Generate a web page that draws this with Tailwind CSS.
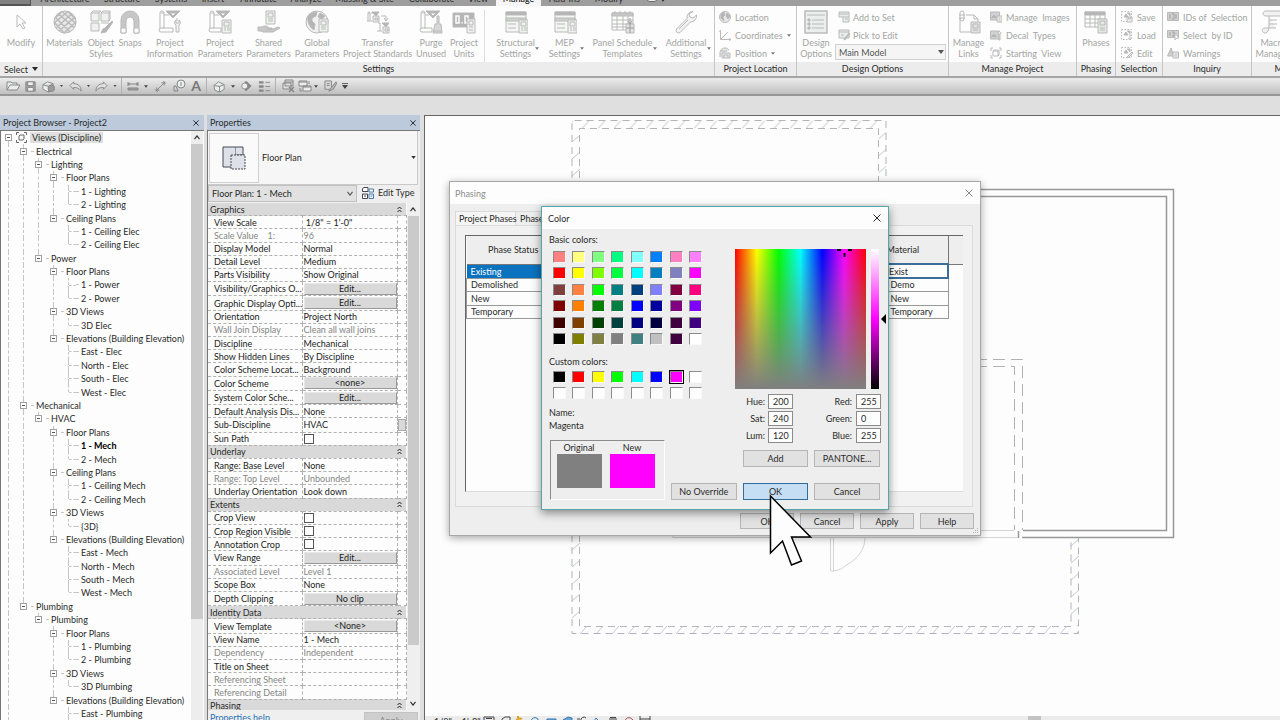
<!DOCTYPE html>
<html lang="en">
<head>
    <meta charset="utf-8">
    <meta name="viewport" content="width=device-width, initial-scale=1">
    <title>Project2 - Floor Plan: 1 - Mech</title>
    <script src="https://cdn.jsdelivr.net/npm/@tailwindcss/browser@4"></script>
</head>
<body class="h-screen overflow-hidden flex flex-col bg-[#dedfde] font-['Lato','Open_Sans',sans-serif] text-[9px] leading-[11px] text-[#2a2a2a]">

    <!-- ICON SPRITE (stroke comes from the toolbar that uses the icon) -->
    <svg class="hidden">
        <symbol id="i-modify" viewBox="0 0 24 24"><path d="M8 5v12l3-3 3 5 2-1-3-5h4z" fill="#fcfdfc"/></symbol>
        <symbol id="i-materials" viewBox="0 0 24 24"><circle cx="12" cy="12" r="11" fill="#e6e7e6"/><path d="M5 3.500l16 14M2 7l15 15M1 12l10 11M9 1.500l14 12M15 1.500l8 8M19 3.500L3 18M22 7L6 21M23 12L11 23M15 1.500L1 13M9 1.500L2 8" stroke-width="1.400"/></symbol>
        <symbol id="i-styles" viewBox="0 0 24 24"><path d="M2 3h8v8H2zM12 3h8v8h-8zM2 13h8v8H2zM2 3l2-2h8l-2 2M12 3l2-2h7l-1 2M21 1v8l-1 2M12 13h8" fill="#f0f1f0"/><path d="M23 11l-7 7-2 1-2 4 5-1 2-3 5-7z" fill="#b4b5b4"/></symbol>
        <symbol id="i-snaps" viewBox="0 0 24 24"><path d="M3 23V10a9 9 0 0 1 18 0v13h-5V11a4 4 0 0 0-8 0v12z" fill="#c6c7c6"/><path d="M3 18h5v5H3zM16 18h5v5h-5z" fill="#fcfdfc"/></symbol>
        <symbol id="i-info" viewBox="0 0 24 24"><path d="M3 3h3v15H3a2 2 0 1 0 0 4h12v-4H5M6 3a2 2 0 0 0-4 0v16M6 5h5M19 8v3" fill="none"/><path d="M8 1h14l-7 7z" fill="#b4b5b4"/><path d="M12 3h6l-3 3z" fill="#fcfdfc"/><path d="M18 10a3 3 0 0 0 0 5v7h3v-7a3 3 0 0 0 0-5v3h-3z" fill="#f0f1f0"/></symbol>
        <symbol id="i-param" viewBox="0 0 24 24"><path d="M3 3h3v15H3a2 2 0 1 0 0 4h10v-4H5M6 3a2 2 0 0 0-4 0v16M6 5h5"/><path d="M8 1h14l-7 7z" fill="#b4b5b4"/><path d="M12 3h6l-3 3z" fill="#fcfdfc"/><path d="M14 10h9v13h-9z" fill="#f0f1f0"/><path d="M16 12h5v4h-5zM16 18h2M19 18h3M16 20h2M19 20h3"/></symbol>
        <symbol id="i-shared" viewBox="0 0 24 24"><path d="M9 1h9v13H9z" fill="#f0f1f0"/><path d="M11 3h5v4h-5zM11 9h5M11 11h5"/><path d="M1 17h4c3-2 6-1 7 1h3v1h-5 6l5-2 2 1-7 4H6l-2-1H1z" fill="#c6c7c6"/></symbol>
        <symbol id="i-global" viewBox="0 0 24 24"><circle cx="12" cy="12" r="11" fill="#f0f1f0"/><path d="M3 6c3-3 6-4 9-4l-1 4-4 2v3l3 3-1 6c-5-3-7-9-6-14zM15 3l5 3-3 3-4-2z" fill="#b4b5b4"/><path d="M14 9h9v13h-9z" fill="#f0f1f0"/><path d="M16 11h5v4h-5zM16 17h5M16 19h5"/></symbol>
        <symbol id="i-transfer" viewBox="0 0 24 24"><path d="M2 3h2v8M1 11h5M4 3a1 1 0 0 0-2 0v8M12 13h2v8M11 21h5M5 3h2M15 6h5v4M18 8l2 3 2-3"/><path d="M6 2h7l-3 4zM16 13h7l-3 4z" fill="#b4b5b4"/><path d="M7 6h6v6H7zM17 17h6v6h-6z" fill="#f0f1f0"/><path d="M9 8h3v2H9zM19 19h3v2h-3z"/></symbol>
        <symbol id="i-purge" viewBox="0 0 24 24"><path d="M3 3h3v15H3a2 2 0 1 0 0 4h10v-4H5M6 3a2 2 0 0 0-4 0v16M6 5h4"/><path d="M7 1h14l-7 7z" fill="#b4b5b4"/><path d="M11 3h6l-3 3z" fill="#fcfdfc"/><path d="M18 6h2v8h2l1 9h-9l2-9h2z" fill="#d6d7d6"/><path d="M14 21h9"/></symbol>
        <symbol id="i-units" viewBox="0 0 24 24"><path d="M1 3h21v14H1z" fill="#b4b5b4"/><path d="M4 6h3v7H4zM13 6h3v7h-3zM10 12v1.500" stroke="#fcfdfc" stroke-width="1.500"/><path d="M15 9h8v14h-8z" fill="#f0f1f0"/><path d="M17 11h4v4h-4zM17 17h4M17 20h4"/></symbol>
        <symbol id="i-struct" viewBox="0 0 24 24"><path d="M2 2h20v20H2z" fill="#f4f5f4"/><path d="M2 2h20v3H2z" fill="#b4b5b4"/><path d="M2 8h20v3H2z" fill="#d0d1d0"/><path d="M4 14h8M4 18h8"/><path d="M15 10h9v13h-9z" fill="#f0f1f0"/><path d="M17 12h5v4h-5zM17 18h2M20 18h3M17 20h2M20 20h3"/></symbol>
        <symbol id="i-panel" viewBox="0 0 24 24"><path d="M1 3h21v17H1z" fill="#fcfdfc"/><path d="M1 3h21v3H1z" fill="#c6c7c6"/><path d="M4 1v3M9 1v3M14 1v3M19 1v3M1 10h21M1 14h21M1 17h21M6 6v14M12 6v14M17 6v14"/><path d="M15 14h8v9h-8z" fill="#e0e1e0"/><path d="M15 18h8M19 14v9M19 8v6M17 11l2 3 2-3" stroke="#9a9b9a"/></symbol>
        <symbol id="i-wrench" viewBox="0 0 24 24"><path d="M19 1.500a6 6 0 0 0-6 7L2.500 19a2.500 2.500 0 0 0 3.500 3.500L16.500 12a6 6 0 0 0 6-7L19 8l-3-1-1-3z" fill="#f0f1f0"/><path d="M14 10l-9 9"/></symbol>
        <symbol id="i-design" viewBox="0 0 24 24"><path d="M1 1h22v22H1z" fill="#eceded" stroke-width="1.500"/><path d="M3 5h18" /><path d="M4 9h2v2H4zM4 13h2v2H4zM4 17h2v2H4z" fill="#b4b5b4"/><path d="M8 10h12M8 14h12M8 18h12"/></symbol>
        <symbol id="i-links" viewBox="0 0 24 24"><path d="M3 8v14h12M9 5h8l4 4v3M17 5v4h4"/><rect x="3" y="1" width="4" height="10" rx="2"/><path d="M2 5h6M2 8h6"/><path d="M14 12h9v11h-9z" fill="#e0e1e0"/><path d="M16 14h5v4h-5zM16 20h5"/></symbol>
        <symbol id="i-phases" viewBox="0 0 24 24"><path d="M1 2h20v15H1z" fill="#fcfdfc"/><path d="M1 2h20v3H1z" fill="#b4b5b4"/><path d="M1 9h20M1 13h20M6 5v12M11 5v12M16 5v12"/><path d="M14 9h9v14h-9z" fill="#e6e7e6"/><path d="M16 11h5v4h-5zM16 18h5M16 20h5"/></symbol>
        <symbol id="i-macro" viewBox="0 0 24 24"><path d="M5 1h16a3 3 0 0 1 0 5H8v10c0 4-1 7-4 7s-4-5 0-5h11M5 1C1 1 1 6 5 6h3M8 10h8M8 14h8" fill="#f0f1f0"/></symbol>

        <symbol id="s-location" viewBox="0 0 12 12"><circle cx="6" cy="6" r="5.500" fill="#e6e7e6"/><path d="M2 3l3-2 1 3-2 2 1 4-3-3zM8 2l3 3-2 3-2-3z" fill="#b4b5b4"/></symbol>
        <symbol id="s-coord" viewBox="0 0 12 12"><path d="M1.500 1v9.500H11M1.500 10.500L9 3M1.500 1l-1 2M10 9.500l2 1-2 1" /></symbol>
        <symbol id="s-position" viewBox="0 0 12 12"><path d="M1 10V5a5 5 0 0 1 9-2M3 11V6h8v5zM5 11V8h4v3M2 4h6" fill="#e6e7e6"/></symbol>
        <symbol id="s-add" viewBox="0 0 12 12"><path d="M1 1h10v5H1zM1 3h10M5 6v5h6V6M7 8h3" fill="#eceded"/></symbol>
        <symbol id="s-pick" viewBox="0 0 12 12"><path d="M1 1h10v8H1zM1 3h10M3 6h3" fill="#eceded"/><path d="M11 4l-4 5-1 2 2-1 4-5z" fill="#c6c7c6"/></symbol>
        <symbol id="s-image" viewBox="0 0 12 12"><path d="M.5 1h9v8h-9z" fill="#d0d1d0"/><path d="M1 7l3-3 3 3" fill="#b4b5b4"/><path d="M7 5h5v6H7z" fill="#f0f1f0"/><path d="M8.500 7h2M8.500 9h2"/></symbol>
        <symbol id="s-decal" viewBox="0 0 12 12"><path d="M.5 2h9v8h-9z" fill="#d0d1d0"/><path d="M1 8l3-3 3 3" fill="#b4b5b4"/><path d="M8 3c0 3 3 3 3 0M9 5v6h1V5" fill="#f0f1f0"/></symbol>
        <symbol id="s-start" viewBox="0 0 12 12"><path d="M3 1H1v3M9 1h2v3M1 8v3h2M11 8v3H9M3 4l1-1h5v5l-1 1H3zM3 4h5v5"/></symbol>
        <symbol id="s-sel" viewBox="0 0 12 12"><path d="M.5.5h10v10H.5z" stroke-dasharray="1.500 1.500"/><path d="M3 6l2-3 2 3zM6 2h3v3" fill="#b4b5b4"/><path d="M6 6h5v5H6z" fill="#f0f1f0"/><path d="M7.500 6v2h2V6"/></symbol>
        <symbol id="s-load" viewBox="0 0 12 12"><path d="M.5.5h10v10H.5z" stroke-dasharray="1.500 1.500"/><path d="M3 6l2-3 2 3zM6 2h3v3" fill="#b4b5b4"/><path d="M9 5v6M7 9l2 2 2-2" /></symbol>
        <symbol id="s-edit" viewBox="0 0 12 12"><path d="M.5.5h10v10H.5z" stroke-dasharray="1.500 1.500"/><path d="M3 6l2-3 2 3zM6 2h3v3" fill="#b4b5b4"/><path d="M11 5l-4 4-1 2 2-1 4-4z" fill="#f0f1f0"/></symbol>
        <symbol id="s-ids" viewBox="0 0 12 12"><path d="M.5 1.500h11v8H.5z" fill="#d0d1d0"/><path d="M3 3v5M5 3h2v5H5M9 3v5" stroke="#a0a1a0"/></symbol>
        <symbol id="s-byid" viewBox="0 0 12 12"><path d="M.5 1.500h11v7H.5z" fill="#d0d1d0"/><path d="M3 3v4M5 3h2v4H5" stroke="#a0a1a0"/><path d="M8 4v7l2-2h2z" fill="#fcfdfc"/></symbol>
        <symbol id="s-warn" viewBox="0 0 12 12"><path d="M4 1L.5 9H7z" fill="#d0d1d0"/><path d="M6 5h5.500v6H6z" fill="#f0f1f0"/><path d="M7.500 7h3M7.500 9h3M4 4v2"/></symbol>

        <symbol id="q-open" viewBox="0 0 14 14"><path d="M1 11V3h4l1 1h5v2M1 11l3-5h10l-3 5z" fill="#eceded"/></symbol>
        <symbol id="q-save" viewBox="0 0 14 14"><path d="M2 2h10v10H2z" fill="#a0a1a0"/><path d="M4 2h6v4H4zM4 8h6v4H4z" fill="#f0f1f0"/></symbol>
        <symbol id="q-sync" viewBox="0 0 14 14"><path d="M1 5l5-3 6 2v6l-5 3-6-3zM1 5l6 2 5-3M7 7v6" fill="#eceded"/><circle cx="10" cy="9" r="3.500" fill="#9a9b9a"/></symbol>
        <symbol id="q-undo" viewBox="0 0 14 14"><path d="M1 6l4-4v2c5 0 8 3 8 8-2-3-4-4-8-4v2z" fill="#e0e1e0"/></symbol>
        <symbol id="q-redo" viewBox="0 0 14 14"><path d="M13 6L9 2v2c-5 0-8 3-8 8 2-3 4-4 8-4v2z" fill="#e0e1e0"/></symbol>
        <symbol id="q-dim" viewBox="0 0 14 14"><path d="M2 3v4M12 3v4M2 5h10M4 4L2 5l2 1M10 4l2 1-2 1"/><path d="M2 9h10v2H2z" fill="#a0a1a0"/></symbol>
        <symbol id="q-align" viewBox="0 0 14 14"><path d="M2 12L12 2M1 10l3 3M10 1l3 3M3 8v3h3M8 3h3v3"/></symbol>
        <symbol id="q-tag" viewBox="0 0 14 14"><circle cx="9" cy="5" r="4" fill="#eceded"/><path d="M9 3v4M2 7v5h4L4 7z"/></symbol>
        <symbol id="q-3d" viewBox="0 0 14 14"><path d="M1 6l5-4 6 3v5l-5 3-5-2zM1 6l6 1 5-2M7 7v6" fill="#eceded"/></symbol>
        <symbol id="q-section" viewBox="0 0 14 14"><path d="M6 2h2l5 5-5 5H6z" fill="#868786"/><circle cx="5.500" cy="7" r="3.500" fill="#eceded"/></symbol>
        <symbol id="q-thin" viewBox="0 0 14 14"><path d="M1 2.500h5M1 7h5M1 11.500h5" stroke-width="2.500"/><path d="M8 2.500h5M8 7h5M8 11.500h5"/></symbol>
        <symbol id="q-close" viewBox="0 0 14 14"><path d="M4 1h8v6H4zM2 4h8v6H2zM4 3h8" fill="#e0e1e0"/><path d="M8 8l5 5M13 8l-5 5" stroke-width="1.500"/></symbol>
        <symbol id="q-switch" viewBox="0 0 14 14"><path d="M1 2h8v5H1zM5 7h8v5H5z" fill="#eceded"/><path d="M1 3h8M5 8h8M11 2v3M2 9v3h2"/></symbol>
        <symbol id="q-paste" viewBox="0 0 14 14"><path d="M1 1h7v9H1zM3 4h3M3 6h3" fill="#d6d7d6"/><path d="M13 2L8 8l-3 4 5-2 4-7z" fill="#b4b5b4"/></symbol>

        <symbol id="caret" viewBox="0 0 6 4"><path d="M0 0h6L3 4z" fill="currentColor" stroke="none"/></symbol>
        <symbol id="x" viewBox="0 0 8 8"><path d="M.5.5l7 7M7.500.5l-7 7" stroke="currentColor" fill="none"/></symbol>
        <symbol id="up" viewBox="0 0 8 6"><path d="M1 5l3-4 3 4" stroke="currentColor" stroke-width="1.300" fill="none"/></symbol>
    </svg>

    <!-- RIBBON TABS -->
    <nav class="h-[6px] shrink-0 bg-[#9d9e9d] overflow-hidden flex items-end">
        <button class="w-[31px] mr-[2px] h-[6px] border-b-2 border-r border-[#555] bg-[#808180]" aria-label="Application menu"></button>
        <button class="w-[64px] pb-[2px]">Architecture</button>
        <button class="w-[50px] pb-[2px]">Structure</button>
        <button class="w-[48px] pb-[2px]">Systems</button>
        <button class="w-[36px] pb-[2px]">Insert</button>
        <button class="w-[55px] pb-[2px]">Annotate</button>
        <button class="w-[40px] pb-[2px]">Analyze</button>
        <button class="w-[77px] pb-[2px]">Massing &amp; Site</button>
        <button class="w-[57px] pb-[2px]">Collaborate</button>
        <button class="w-[36px] pb-[2px]">View</button>
        <button class="w-[45px] pb-[2px] bg-[#f4f5f4] text-black">Manage</button>
        <button class="w-[47px] pb-[2px]">Add-Ins</button>
        <button class="w-[42px] pb-[2px]">Modify</button>
        <button class="ml-[16px] mb-[4px] w-[12px] h-[8px] rounded-sm border border-[#666] bg-[#f0f1f0]" aria-label="Minimize ribbon"></button>
        <svg class="ml-[3px] mb-[4px] w-[4px] h-[3px]"><use href="#caret"/></svg>
    </nav>

    <!-- RIBBON -->
    <div class="h-[72px] shrink-0 flex overflow-hidden bg-[#fcfdfc] border-b-2 border-[#a4a5a4] fill-none stroke-[#b9bab9] text-[#a4a5a4] whitespace-nowrap">
        <section class="w-[43px] shrink-0 flex flex-col border-r border-[#c4c5c4]">
            <div class="h-[56px] pt-[4px] flex">
                <button class="flex-1 flex flex-col items-center"><svg class="size-6 mb-[3px]"><use href="#i-modify"/></svg>Modify</button>
            </div>
            <button class="h-[14px] flex items-center justify-center gap-[4px] bg-[#ebeceb] text-[#2a2a2a]">Select <svg class="w-[6px] h-[4px]"><use href="#caret"/></svg></button>
        </section>

        <section class="w-[672px] shrink-0 flex flex-col border-r border-[#c4c5c4]">
            <div class="h-[56px] pt-[4px] flex items-start">
                <button class="w-[43px] flex flex-col items-center"><svg class="size-6 mb-[3px]"><use href="#i-materials"/></svg>Materials</button>
                <button class="w-[30px] flex flex-col items-center"><svg class="size-6 mb-[3px]"><use href="#i-styles"/></svg><span>Object<br>Styles</span></button>
                <button class="w-[28px] flex flex-col items-center"><svg class="size-6 mb-[3px]"><use href="#i-snaps"/></svg>Snaps</button>
                <button class="w-[52px] flex flex-col items-center"><svg class="size-6 mb-[3px]"><use href="#i-info"/></svg><span>Project<br>Information</span></button>
                <button class="w-[48px] flex flex-col items-center"><svg class="size-6 mb-[3px]"><use href="#i-param"/></svg><span>Project<br>Parameters</span></button>
                <button class="w-[49px] flex flex-col items-center"><svg class="size-6 mb-[3px]"><use href="#i-shared"/></svg><span>Shared<br>Parameters</span></button>
                <button class="w-[48px] flex flex-col items-center"><svg class="size-6 mb-[3px]"><use href="#i-global"/></svg><span>Global<br>Parameters</span></button>
                <button class="w-[73px] flex flex-col items-center"><svg class="size-6 mb-[3px]"><use href="#i-transfer"/></svg><span>Transfer<br>Project Standards</span></button>
                <button class="w-[34px] flex flex-col items-center"><svg class="size-6 mb-[3px]"><use href="#i-purge"/></svg><span>Purge<br>Unused</span></button>
                <button class="w-[32px] flex flex-col items-center"><svg class="size-6 mb-[3px]"><use href="#i-units"/></svg><span>Project<br>Units</span></button>
                <div class="w-[5px] mr-[3px] h-[52px] border-r border-[#dcdddc]"></div>
                <button class="relative w-[55px] flex flex-col items-center"><svg class="size-6 mb-[3px]"><use href="#i-struct"/></svg><span>Structural<br>Settings</span><svg class="absolute right-[4px] bottom-[9px] w-[4px] h-[3px] text-[#777]"><use href="#caret"/></svg></button>
                <button class="relative w-[43px] flex flex-col items-center"><svg class="size-6 mb-[3px]"><use href="#i-struct"/></svg><span>MEP<br>Settings</span><svg class="absolute right-[2px] bottom-[9px] w-[4px] h-[3px] text-[#777]"><use href="#caret"/></svg></button>
                <button class="relative w-[73px] flex flex-col items-center"><svg class="size-6 mb-[3px]"><use href="#i-panel"/></svg><span>Panel Schedule<br>Templates</span><svg class="absolute right-[2px] bottom-[9px] w-[4px] h-[3px] text-[#777]"><use href="#caret"/></svg></button>
                <button class="relative w-[54px] flex flex-col items-center"><svg class="size-6 mb-[3px]"><use href="#i-wrench"/></svg><span>Additional<br>Settings</span><svg class="absolute right-[2px] bottom-[9px] w-[4px] h-[3px] text-[#777]"><use href="#caret"/></svg></button>
            </div>
            <h2 class="h-[14px] leading-[14px] text-center bg-[#ebeceb] text-[#2a2a2a]">Settings</h2>
        </section>

        <section class="w-[82px] shrink-0 flex flex-col border-r border-[#c4c5c4]">
            <div class="h-[56px] pt-[2px] pl-[4px] flex flex-col items-start">
                <button class="h-[18px] flex items-center gap-[4px]"><svg class="size-3"><use href="#s-location"/></svg>Location</button>
                <button class="h-[18px] flex items-center gap-[4px]"><svg class="size-3"><use href="#s-coord"/></svg>Coordinates<svg class="w-[4px] h-[3px] text-[#777]"><use href="#caret"/></svg></button>
                <button class="h-[18px] flex items-center gap-[4px]"><svg class="size-3"><use href="#s-position"/></svg>Position<svg class="w-[4px] h-[3px] text-[#777]"><use href="#caret"/></svg></button>
            </div>
            <h2 class="h-[14px] leading-[14px] text-center bg-[#ebeceb] text-[#2a2a2a]">Project Location</h2>
        </section>

        <section class="w-[152px] shrink-0 flex flex-col border-r border-[#c4c5c4]">
            <div class="h-[56px] flex">
                <button class="w-[38px] pt-[4px] flex flex-col items-center"><svg class="size-6 mb-[3px]"><use href="#i-design"/></svg><span>Design<br>Options</span></button>
                <div class="flex-1 pt-[2px] pr-[2px] flex flex-col items-start">
                    <button class="h-[18px] pl-[3px] flex items-center gap-[3px]"><svg class="size-3"><use href="#s-add"/></svg>Add to Set</button>
                    <button class="h-[18px] pl-[3px] flex items-center gap-[3px]"><svg class="size-3"><use href="#s-pick"/></svg>Pick to Edit</button>
                    <div class="relative w-full">
                        <select aria-label="Active design option" class="appearance-none w-full h-[16px] pl-[3px] border border-[#cfd0cf] bg-[#f4f5f4] text-[#555]"><option>Main Model</option></select>
                        <svg class="absolute right-[2px] top-[6px] w-[6px] h-[4px] text-[#555]"><use href="#caret"/></svg>
                    </div>
                </div>
            </div>
            <h2 class="h-[14px] leading-[14px] text-center bg-[#ebeceb] text-[#2a2a2a]">Design Options</h2>
        </section>

        <section class="w-[128px] shrink-0 flex flex-col border-r border-[#c4c5c4]">
            <div class="h-[56px] flex">
                <button class="w-[39px] pt-[4px] flex flex-col items-center"><svg class="size-6 mb-[3px]"><use href="#i-links"/></svg><span>Manage<br>Links</span></button>
                <div class="pt-[2px] pl-[2px] flex flex-col items-start">
                    <button class="h-[18px] flex items-center gap-[4px]"><svg class="size-3"><use href="#s-image"/></svg>Manage &nbsp;Images</button>
                    <button class="h-[18px] flex items-center gap-[4px]"><svg class="size-3"><use href="#s-decal"/></svg>Decal &nbsp;Types</button>
                    <button class="h-[18px] flex items-center gap-[4px]"><svg class="size-3"><use href="#s-start"/></svg>Starting &nbsp;View</button>
                </div>
            </div>
            <h2 class="h-[14px] leading-[14px] text-center bg-[#ebeceb] text-[#2a2a2a]">Manage Project</h2>
        </section>

        <section class="w-[39px] shrink-0 flex flex-col border-r border-[#c4c5c4]">
            <div class="h-[56px] pt-[4px] flex">
                <button class="flex-1 flex flex-col items-center"><svg class="size-6 mb-[3px]"><use href="#i-phases"/></svg>Phases</button>
            </div>
            <h2 class="h-[14px] leading-[14px] text-center bg-[#ebeceb] text-[#2a2a2a]">Phasing</h2>
        </section>

        <section class="w-[47px] shrink-0 flex flex-col border-r border-[#c4c5c4]">
            <div class="h-[56px] pt-[2px] pl-[5px] flex flex-col items-start">
                <button class="h-[18px] flex items-center gap-[4px]"><svg class="size-3"><use href="#s-sel"/></svg>Save</button>
                <button class="h-[18px] flex items-center gap-[4px]"><svg class="size-3"><use href="#s-load"/></svg>Load</button>
                <button class="h-[18px] flex items-center gap-[4px]"><svg class="size-3"><use href="#s-edit"/></svg>Edit</button>
            </div>
            <h2 class="h-[14px] leading-[14px] text-center bg-[#ebeceb] text-[#2a2a2a]">Selection</h2>
        </section>

        <section class="w-[89px] shrink-0 flex flex-col border-r border-[#c4c5c4]">
            <div class="h-[56px] pt-[2px] pl-[4px] flex flex-col items-start">
                <button class="h-[18px] flex items-center gap-[4px]"><svg class="size-3"><use href="#s-ids"/></svg>IDs of &nbsp;Selection</button>
                <button class="h-[18px] flex items-center gap-[4px]"><svg class="size-3"><use href="#s-byid"/></svg>Select &nbsp;by ID</button>
                <button class="h-[18px] flex items-center gap-[4px]"><svg class="size-3"><use href="#s-warn"/></svg>Warnings</button>
            </div>
            <h2 class="h-[14px] leading-[14px] text-center bg-[#ebeceb] text-[#2a2a2a]">Inquiry</h2>
        </section>

        <section class="w-[74px] shrink-0 flex flex-col">
            <div class="h-[56px] pt-[4px] pl-[3px] flex">
                <button class="w-[36px] flex flex-col items-center"><svg class="size-6 mb-[3px]"><use href="#i-macro"/></svg><span>Macro<br>Manager</span></button>
            </div>
            <h2 class="h-[14px] leading-[14px] text-center bg-[#ebeceb] text-[#2a2a2a]">Macros</h2>
        </section>
    </div>

    <!-- QUICK ACCESS TOOLBAR -->
    <div class="h-[18px] shrink-0 flex items-center pl-[1px] border-b-2 border-[#969796] bg-gradient-to-b from-[#ebeceb] to-[#bfc0bf] fill-none stroke-[#868786] text-[#444]">
        <button class="w-[23px] flex justify-center" aria-label="Open"><svg class="size-[14px]"><use href="#q-open"/></svg></button>
        <button class="w-[13px] flex justify-center" aria-label="Save"><svg class="size-[13px]"><use href="#q-save"/></svg></button>
        <button class="w-[23px] flex justify-center" aria-label="Synchronize"><svg class="size-[13px]"><use href="#q-sync"/></svg></button>
        <svg class="w-[3px] h-[2px]"><use href="#caret"/></svg>
        <button class="w-[24px] flex justify-center" aria-label="Undo"><svg class="size-[13px]"><use href="#q-undo"/></svg></button>
        <svg class="w-[3px] h-[2px]"><use href="#caret"/></svg>
        <button class="w-[23px] flex justify-center" aria-label="Redo"><svg class="size-[13px]"><use href="#q-redo"/></svg></button>
        <svg class="w-[4px] h-[2px]"><use href="#caret"/></svg>
        <div class="w-[5px] mr-[4px] h-[16px] border-r border-[#b0b1b0]"></div>
        <button class="w-[14px] flex justify-center" aria-label="Measure"><svg class="size-[14px]"><use href="#q-dim"/></svg></button>
        <svg class="w-[4px] h-[3px] mx-[4px]"><use href="#caret"/></svg>
        <button class="w-[17px] flex justify-center" aria-label="Aligned dimension"><svg class="size-[13px]"><use href="#q-align"/></svg></button>
        <button class="w-[19px] flex justify-center" aria-label="Tag by category"><svg class="size-[14px]"><use href="#q-tag"/></svg></button>
        <button class="w-[16px] font-bold text-[14px] leading-[14px] text-[#777]" aria-label="Text">A</button>
        <div class="w-[3px] mr-[3px] h-[16px] border-r border-[#b0b1b0]"></div>
        <button class="w-[19px] flex justify-center" aria-label="Default 3D view"><svg class="size-[13px]"><use href="#q-3d"/></svg></button>
        <svg class="w-[4px] h-[3px] mx-[2px]"><use href="#caret"/></svg>
        <button class="w-[18px] flex justify-center" aria-label="Section"><svg class="size-[12px]"><use href="#q-section"/></svg></button>
        <button class="w-[18px] flex justify-center" aria-label="Thin lines"><svg class="size-[13px]"><use href="#q-thin"/></svg></button>
        <div class="w-[3px] mr-[2px] h-[16px] border-r border-[#b0b1b0]"></div>
        <button class="w-[19px] flex justify-center" aria-label="Close hidden windows"><svg class="size-[14px]"><use href="#q-close"/></svg></button>
        <button class="w-[15px] flex justify-center" aria-label="Switch windows"><svg class="size-[14px]"><use href="#q-switch"/></svg></button>
        <svg class="w-[4px] h-[3px] mx-[2px]"><use href="#caret"/></svg>
        <button class="w-[20px] flex justify-center" aria-label="Match type"><svg class="size-[13px]"><use href="#q-paste"/></svg></button>
        <button class="w-[10px] flex flex-col items-center gap-px" aria-label="Customize toolbar"><span class="w-[6px] h-px bg-[#666]"></span><svg class="w-[6px] h-[4px]"><use href="#caret"/></svg></button>
    </div>

    <main class="flex-1 min-h-0 mt-[19px] flex">
        <!-- PROJECT BROWSER -->
        <aside class="w-[204px] mr-[3px] shrink-0 flex flex-col">
            <header class="h-[15px] pl-[3px] pr-[5px] shrink-0 flex items-center justify-between bg-[#bccadb]">
                <h2>Project Browser - Project2</h2>
                <button aria-label="Close project browser"><svg class="size-[6px] text-black"><use href="#x"/></svg></button>
            </header>
            <div class="flex-1 min-h-0 flex border-t border-l border-[#777] bg-[#fcfdfc]">
                <ul id="tree" class="flex-1 min-w-0 flex flex-col whitespace-nowrap"></ul>
                <div class="w-[12px] mr-[1px] flex flex-col bg-[#ededed]">
                    <button class="h-[13px] flex items-center justify-center" aria-label="Scroll up"><svg class="w-[8px] h-[5px]"><use href="#up"/></svg></button>
                    <div class="h-[475px] bg-[#c9cac9]"></div>
                </div>
            </div>
        </aside>

        <!-- PROPERTIES -->
        <aside class="w-[213px] mr-[4px] shrink-0 flex flex-col bg-[#eeefee]">
            <header class="h-[15px] pl-[3px] pr-[4px] shrink-0 flex items-center justify-between bg-[#bccadb]">
                <h2>Properties</h2>
                <button aria-label="Close properties"><svg class="size-[6px] text-black"><use href="#x"/></svg></button>
            </header>
            <div class="flex-1 min-h-0 flex flex-col border-t border-l border-[#777]">
                <button class="h-[54px] mr-[2px] p-px shrink-0 flex items-center border-b border-r border-[#c8c9c8] bg-[#f5f6f5] text-left">
                    <span class="size-[50px] mr-[3px] flex items-center justify-center border border-[#cfd0cf] bg-[#f9faf9]">
                        <svg viewBox="0 0 24 24" class="size-6" fill="#dfe1e8" stroke="#444a55"><path d="M1 1h13v20H1z"/><path d="M14 1h7v8H14" /><path d="M9 9h14v14H9z" stroke-dasharray="2 1"/></svg>
                    </span>
                    <span class="flex-1">Floor Plan</span>
                    <svg class="w-[5px] h-[3px] text-[#333]"><use href="#caret"/></svg>
                </button>
                <div class="h-[18px] shrink-0 flex">
                    <div class="relative w-[149px]">
                        <select aria-label="View" class="appearance-none w-full h-[17px] pl-[3px] border border-[#c0c1c0] bg-[#e0e1e0]"><option>Floor Plan: 1 - Mech</option></select>
                        <svg class="absolute right-[3px] top-[6px] w-[8px] h-[5px] rotate-180 text-[#555]"><use href="#up"/></svg>
                    </div>
                    <button class="flex-1 pl-[5px] pb-[3px] flex items-center gap-[4px]">
                        <svg viewBox="0 0 12 12" class="size-3" fill="#fff" stroke="#445"><path d="M2 .5h4v4H.5v-3zM.5 7h5v4.500h-5zM2 9h2"/><path d="M7 2h4.500v3H7zM7 7h4.500v4.500H7zM8.500 9h2" stroke="#4a7aa8"/></svg>Edit Type
                    </button>
                </div>
                <div class="flex-1 min-h-0 flex overflow-hidden">
                    <table class="w-[198px] h-[509px] table-fixed border-collapse bg-[#fcfdfc] whitespace-nowrap">
                        <colgroup><col class="w-[94px]"><col class="w-[95px]"><col class="w-[9px]"></colgroup>
                        <tbody id="props"></tbody>
                    </table>
                    <div class="w-[11px] ml-[1px] flex flex-col">
                        <button class="h-[13px] flex items-center justify-center" aria-label="Scroll properties up"><svg class="w-[8px] h-[5px]"><use href="#up"/></svg></button>
                        <div class="h-[429px] bg-[#c9cac9]"></div>
                        <button class="mt-auto h-[13px] flex items-center justify-center" aria-label="Scroll properties down"><svg class="w-[8px] h-[5px] rotate-180"><use href="#up"/></svg></button>
                    </div>
                </div>
                <footer class="h-[10px] shrink-0 overflow-hidden pl-[2px] pr-[2px] pt-[2px] flex items-start justify-between bg-[#eeefee]">
                    <a href="#" class="text-[#2c6fb5] underline">Properties help</a>
                    <button class="w-[54px] h-[16px] shrink-0 border border-[#c2c3c2] bg-[#cdcecd] text-[#888]">Apply</button>
                </footer>
            </div>
        </aside>

        <!-- DRAWING AREA -->
        <div class="flex-1 relative overflow-hidden border-t border-l border-[#666] bg-[#fcfdfc] flex flex-col justify-end">
            <svg class="absolute left-0 top-0 w-[855px] h-[604px]" viewBox="425 116 855 604" fill="none">
                <defs>
                    <pattern id="hatchH" width="16" height="8" patternUnits="userSpaceOnUse" patternTransform="translate(580 120.500)"><path d="M2 8L9 0" stroke="#c4c6c8"/></pattern>
                    <pattern id="hatchB" width="16" height="8" patternUnits="userSpaceOnUse" patternTransform="translate(578 626)"><path d="M2 8L9 0" stroke="#c6c7d6"/></pattern>
                    <pattern id="hatchV" width="8" height="17" patternUnits="userSpaceOnUse" patternTransform="translate(572 134)"><path d="M0 8L8 1" stroke="#c4c6c8"/></pattern>
                    <pattern id="hatchR" width="8" height="17" patternUnits="userSpaceOnUse" patternTransform="translate(878.500 131)"><path d="M0 8L8 1" stroke="#c4c6c8"/></pattern>
                    <pattern id="hatchR2" width="8" height="17" patternUnits="userSpaceOnUse" patternTransform="translate(1071 538)"><path d="M0 8L8 1" stroke="#c6c7d6"/></pattern>
                </defs>
                <path d="M572 120.500h314v8H572z" fill="url(#hatchH)"/>
                <path d="M572 128h8v498h-8z" fill="url(#hatchV)"/>
                <path d="M878.500 128h8v60h-8z" fill="url(#hatchR)"/>
                <path d="M1071 538h8v88h-8z" fill="url(#hatchR2)"/>
                <path d="M572 626h507v8H572z" fill="url(#hatchB)"/>
                <g stroke="#b2b4b7" stroke-dasharray="7 5">
                    <path d="M572 190V120.500h314V190M579.500 190V128.500h299V190"/>
                    <path d="M572 535v98.500h506.500V538M579.500 535v91.500h491.500V538" stroke="#b2b3c2"/>
                </g>
                <path d="M975 189.500h198.500v348H1022M975 196.500h191.500v334H1023M1018.500 531v7" stroke="#979997" stroke-width="1.500"/>
                <path d="M975 359.500h47.500V530M975 366.500h39.500V530" stroke="#b0b2b0" stroke-dasharray="12 6"/>
                <path d="M673 538v-4M673 537.500h345M975 530.500h39M830.500 537v34h3v-34M833 571c6-1 9-2 12-5 14-8 20-17 20-29" stroke="#d2d3d2"/>
            </svg>
            <div class="relative h-[4px] overflow-hidden flex items-start gap-[3px] pl-[9px] bg-[#eaebea]">
                <span class="w-[46px] shrink-0 whitespace-nowrap">1/8" = 1'-0"</span>
                <svg class="w-[180px] h-[8px] shrink-0" fill="none" stroke="#444"><path d="M1 1h10v7H1zM3 2.500h6M19 6V3l3-2h5v6"/><path d="M33 6a4 4 0 0 1 6-3M35 0v2" stroke="#d9a520" stroke-width="2"/><path d="M48 6a4 4 0 0 1 7-3v4" stroke="#3578b5"/><path d="M64 3h9v4h-9zM80 4l5-3 4 1v5h-9z" fill="#6fa3cf" stroke="#3578b5"/><path d="M94 3h3M98 5a3 3 0 0 1 5-3"/><path d="M111 5l2-3 3 3" stroke="#3578b5"/><path d="M126 3h8M127 1.500h6"/><path d="M142 6a4 4 0 0 1 7-3l2 2" stroke="#a05050"/><path d="M157 0v8M167 0v8M157 3h10"/></svg>
                <div class="ml-[362px] w-[13px] h-[4px] bg-[#c2c3c2]"></div>
            </div>
        </div>
    </main>

    <!-- PHASING DIALOG -->
    <div role="dialog" aria-label="Phasing" class="absolute left-[449px] top-[181px] w-[532px] h-[355px] flex flex-col border border-[#a6a7a6] bg-[#edeeed] shadow-[0_2px_8px_rgba(0,0,0,0.35)]">
        <header class="h-[22px] pl-[5px] pr-[7px] flex items-center justify-between bg-[#fcfdfc] text-[#8c8d8c]">
            <h2>Phasing</h2>
            <button aria-label="Close phasing"><svg class="size-2"><use href="#x"/></svg></button>
        </header>
        <div class="flex-1 pt-[7px] px-[5px] flex flex-col">
            <div class="h-[14px] flex whitespace-nowrap">
                <button class="w-[61px] pl-[3px] text-left border border-b-0 border-[#d8d9d8] bg-[#f4f5f4]">Project Phases</button>
                <button class="w-[61px] pl-[4px] text-left border border-b-0 border-l-0 border-[#d8d9d8]">Phase Filters</button>
            </div>
            <div class="h-[282px] mr-[2px] border border-[#dadbda] bg-[#f0f1f0] pt-[9px] pl-[9px] pr-[9px]">
                <div class="h-[257px] border-t border-l border-[#666] border-b border-b-[#dadbda] bg-[#fcfdfc]">
                    <table class="w-full table-fixed border-collapse">
                        <colgroup><col class="w-[94px]"><col><col class="w-[66px]"><col class="w-[15px]"></colgroup>
                        <thead>
                            <tr class="h-[28px] bg-[#edeeed] border-b border-[#777]">
                                <th class="font-normal border-r border-[#777]">Phase Status</th>
                                <th class="border-r border-[#777]"></th>
                                <th class="font-normal text-left pl-[4px] border-r border-[#777]">Material</th>
                                <th></th>
                            </tr>
                        </thead>
                        <tbody>
                            <tr class="h-[14px]"><td class="pl-[4px] bg-[#0b72c0] text-white">Existing</td><td class="border border-[#999]"></td><td class="pl-[6px] border-2 border-[#3c6e99]">Exist</td></tr>
                            <tr class="h-[13px]"><td class="pl-[4px] border border-[#999]">Demolished</td><td class="border border-[#999]"></td><td class="pl-[8px] border border-[#999]">Demo</td></tr>
                            <tr class="h-[14px]"><td class="pl-[4px] border border-[#999]">New</td><td class="border border-[#999]"></td><td class="pl-[8px] border border-[#999]">New</td></tr>
                            <tr class="h-[13px]"><td class="pl-[4px] border border-[#999]">Temporary</td><td class="border border-[#999]"></td><td class="pl-[8px] border border-[#999]">Temporary</td></tr>
                        </tbody>
                    </table>
                </div>
            </div>
            <div class="mt-[6px] pr-px flex justify-end gap-[6px]">
                <button class="w-[54px] h-[16px] border border-[#b4b5b4] bg-[#e0e1e0]">OK</button>
                <button class="w-[54px] h-[16px] border border-[#b4b5b4] bg-[#e0e1e0]">Cancel</button>
                <button class="w-[54px] h-[16px] border border-[#b4b5b4] bg-[#e0e1e0]">Apply</button>
                <button class="w-[54px] h-[16px] border border-[#b4b5b4] bg-[#e0e1e0]">Help</button>
            </div>
        </div>
        <svg class="absolute right-[1px] bottom-[1px] size-[6px]" fill="#b0b1b0"><path d="M4 0h1v1H4zM2 2h1v1H2zM4 2h1v1H4zM0 4h1v1H0zM2 4h1v1H2zM4 4h1v1H4z"/></svg>
    </div>

    <!-- COLOR DIALOG -->
    <div role="dialog" aria-label="Color" class="absolute left-[541px] top-[206px] w-[348px] h-[304px] flex flex-col border border-[#55a5aa] bg-[#edeeed] shadow-[0_3px_9px_rgba(0,0,0,0.45)]">
        <header class="h-[22px] pl-[6px] pr-[7px] flex items-center justify-between bg-[#fcfdfc]">
            <h2>Color</h2>
            <button aria-label="Close color"><svg class="size-2"><use href="#x"/></svg></button>
        </header>
        <div class="h-[209px] pl-[7px] pr-[2px] flex justify-between">
            <div class="pt-[5px]">
                <h3>Basic colors:</h3>
                <div id="basic" class="mt-[6px] ml-[4px] w-[149px] h-[94px] grid grid-cols-[repeat(8,13px)] justify-between content-between"></div>
                <h3 class="mt-[11px]">Custom colors:</h3>
                <div id="custom" class="mt-[4px] ml-[4px] w-[149px] h-[28px] grid grid-cols-[repeat(8,13px)] justify-between content-between"></div>
                <p class="mt-[8px]">Name:</p>
                <p class="mt-[2px]">Magenta</p>
            </div>
            <div class="w-[151px] pt-[20px]">
                <div class="flex">
                    <div class="relative w-[131px] h-[140px] mr-[5px] bg-[linear-gradient(to_bottom,transparent,#7f7f7f),linear-gradient(to_right,#f00,#ff0,#0f0,#0ff,#00f,#f0f,#f00)]">
                        <svg class="absolute left-[102px] top-0 w-[16px] h-[9px]" stroke="#000" stroke-width="2"><path d="M0 1h4M11 1h4M7.500 4v4"/></svg>
                    </div>
                    <div class="w-[8px] h-[140px] bg-[linear-gradient(to_bottom,#fff,#f0f,#000)]"></div>
                    <svg class="mt-[65px] ml-[2px] w-[5px] h-[10px]"><path d="M5 0v10L0 5z"/></svg>
                </div>
                <div class="mt-[5px] grid grid-cols-[33px_25px_63px_25px] gap-y-[2px] items-center text-right">
                    <label for="hue" class="pr-[3px]">Hue:</label><input id="hue" value="200" class="w-full h-[15px] pl-[4px] border border-[#8a8b8a] bg-[#fcfdfc]">
                    <label for="red" class="pr-[4px]">Red:</label><input id="red" value="255" class="w-full h-[15px] pl-[4px] border border-[#8a8b8a] bg-[#fcfdfc]">
                    <label for="sat" class="pr-[3px]">Sat:</label><input id="sat" value="240" class="w-full h-[15px] pl-[4px] border border-[#8a8b8a] bg-[#fcfdfc]">
                    <label for="green" class="pr-[4px]">Green:</label><input id="green" value="0" class="w-full h-[15px] pl-[4px] border border-[#8a8b8a] bg-[#fcfdfc]">
                    <label for="lum" class="pr-[3px]">Lum:</label><input id="lum" value="120" class="w-full h-[15px] pl-[4px] border border-[#8a8b8a] bg-[#fcfdfc]">
                    <label for="blue" class="pr-[4px]">Blue:</label><input id="blue" value="255" class="w-full h-[15px] pl-[4px] border border-[#8a8b8a] bg-[#fcfdfc]">
                </div>
            </div>
        </div>
        <div class="pt-[2px] pl-[8px] pr-[8px] flex gap-[6px]">
            <div class="w-[115px] h-[60px] pt-[1px] pr-[4px] flex justify-center gap-[8px] border border-t-[#8a8b8a] border-l-[#8a8b8a] border-b-[#fcfdfc] border-r-[#fcfdfc] text-center">
                <div class="w-[45px]">Original<div class="h-[34px] mt-[1px] bg-[#7f807f]"></div></div>
                <div class="w-[45px]">New<div class="h-[34px] mt-[1px] bg-[#ff00ff]"></div></div>
            </div>
            <div class="flex-1 pt-[10px] grid grid-cols-3 gap-x-[6px] content-between">
                <button class="col-start-2 h-[17px] border border-[#b4b5b4] bg-[#e0e1e0]">Add</button>
                <button class="h-[17px] border border-[#b4b5b4] bg-[#e0e1e0]">PANTONE...</button>
                <button class="col-start-1 h-[17px] border border-[#b4b5b4] bg-[#e0e1e0]">No Override</button>
                <button class="h-[17px] border border-[#2f6f9f] bg-[#c6def3]">OK</button>
                <button class="h-[17px] border border-[#b4b5b4] bg-[#e0e1e0]">Cancel</button>
            </div>
        </div>
    </div>

    <!-- mouse pointer -->
    <svg class="absolute left-[769px] top-[493px] w-[46px] h-[76px] pointer-events-none" fill="#fcfdfc" stroke="#000" stroke-width="1.500"><path d="M1.500 3v57l12-12 9 24 10-4-10-24h19z"/></svg>

    <script>
        // [depth, label, has next sibling]
        const tree = [
            [0, 'Views (Discipline)', 1],
            [1, 'Electrical', 1],
            [2, 'Lighting', 1],
            [3, 'Floor Plans', 1], [4, '1 - Lighting', 1], [4, '2 - Lighting', 0],
            [3, 'Ceiling Plans', 0], [4, '1 - Ceiling Elec', 1], [4, '2 - Ceiling Elec', 0],
            [2, 'Power', 0],
            [3, 'Floor Plans', 1], [4, '1 - Power', 1], [4, '2 - Power', 0],
            [3, '3D Views', 1], [4, '3D Elec', 0],
            [3, 'Elevations (Building Elevation)', 0],
            [4, 'East - Elec', 1], [4, 'North - Elec', 1], [4, 'South - Elec', 1], [4, 'West - Elec', 0],
            [1, 'Mechanical', 1],
            [2, 'HVAC', 0],
            [3, 'Floor Plans', 1], [4, '1 - Mech', 1], [4, '2 - Mech', 0],
            [3, 'Ceiling Plans', 1], [4, '1 - Ceiling Mech', 1], [4, '2 - Ceiling Mech', 0],
            [3, '3D Views', 1], [4, '{3D}', 0],
            [3, 'Elevations (Building Elevation)', 0],
            [4, 'East - Mech', 1], [4, 'North - Mech', 1], [4, 'South - Mech', 1], [4, 'West - Mech', 0],
            [1, 'Plumbing', 0],
            [2, 'Plumbing', 0],
            [3, 'Floor Plans', 1], [4, '1 - Plumbing', 1], [4, '2 - Plumbing', 0],
            [3, '3D Views', 1], [4, '3D Plumbing', 0],
            [3, 'Elevations (Building Elevation)', 0],
            [4, 'East - Plumbing', 1],
        ];
        const open = [];
        document.getElementById('tree').innerHTML = tree.map(([depth, label, next]) => {
            open[depth] = next;
            let guides = '';
            for (let i = 0; i < depth; i++) {
                guides += `<span class="w-[15px] flex justify-center">${open[i] ? '<i class="border-l border-dashed border-[#c4c5c4]"></i>' : ''}</span>`;
            }
            const top = depth ? '<i class="flex-1 border-l border-dashed border-[#c4c5c4]"></i>' : '<i class="flex-1"></i>';
            const bottom = next ? '<i class="flex-1 border-l border-dashed border-[#c4c5c4]"></i>' : '<i class="flex-1"></i>';
            const box = depth < 4
                ? '<button class="size-[7px] border border-[#a0a1a0] bg-[#fcfdfc] flex items-center justify-center" aria-label="Collapse"><i class="w-[3px] h-px bg-[#555]"></i></button>'
                : '<i class="w-[7px] ml-[7px] border-t border-dashed border-[#c4c5c4]"></i>';
            const lead = depth
                ? '<i class="w-[3px] mr-[2px] self-center border-t border-dashed border-[#c4c5c4]"></i>'
                : '<svg class="size-[11px] mr-[3px] self-center" viewBox="0 0 11 11" fill="none" stroke="#666"><path d="M3 .5H.5V3M8 .5h2.500V3M.5 8v2.500H3M10.500 8v2.500H8M3 4l1-1h4v4L7 8H3z"/></svg>';
            const name = depth
                ? `<span class="self-center ${label === '1 - Mech' ? 'font-bold text-black' : ''}">${label}</span>`
                : `<span class="self-center px-[2px] bg-[#dedfde]">${label}</span>`;
            return `<li class="flex-1 min-h-0 flex">${guides}<span class="w-[15px] flex flex-col items-center">${top}${box}${bottom}</span>${lead}${name}</li>`;
        }).join('');

        // type: h = group header, t = text, d = disabled text, b = button, c = checkbox
        const props = [
            ['h', 'Graphics'],
            ['t', 'View Scale', '&nbsp;1/8" = 1\'-0"'], ['d', 'Scale Value &nbsp;&nbsp; 1:', '96'],
            ['t', 'Display Model', 'Normal'], ['t', 'Detail Level', 'Medium'], ['t', 'Parts Visibility', 'Show Original'],
            ['b', 'Visibility/Graphics O...', 'Edit...'], ['b', 'Graphic Display Opti...', 'Edit...'],
            ['t', 'Orientation', 'Project North'], ['d', 'Wall Join Display', 'Clean all wall joins'],
            ['t', 'Discipline', 'Mechanical'], ['t', 'Show Hidden Lines', 'By Discipline'], ['t', 'Color Scheme Locat...', 'Background'],
            ['b', 'Color Scheme', '&lt;none&gt;'], ['b', 'System Color Sche...', 'Edit...'],
            ['t', 'Default Analysis Dis...', 'None'], ['t', 'Sub-Discipline', 'HVAC', 1], ['c', 'Sun Path'],
            ['h', 'Underlay'],
            ['t', 'Range: Base Level', 'None'], ['d', 'Range: Top Level', 'Unbounded'], ['t', 'Underlay Orientation', 'Look down'],
            ['h', 'Extents'],
            ['c', 'Crop View'], ['c', 'Crop Region Visible'], ['c', 'Annotation Crop'],
            ['b', 'View Range', 'Edit...'], ['d', 'Associated Level', 'Level 1'], ['t', 'Scope Box', 'None'], ['b', 'Depth Clipping', 'No clip'],
            ['h', 'Identity Data'],
            ['b', 'View Template', '&lt;None&gt;'], ['t', 'View Name', '1 - Mech'], ['d', 'Dependency', 'Independent'],
            ['t', 'Title on Sheet', ''], ['d', 'Referencing Sheet', ''], ['d', 'Referencing Detail', ''],
            ['h', 'Phasing'],
        ];
        document.getElementById('props').innerHTML = props.map(([type, label, value, more], i) => {
            if (type === 'h') {
                return `<tr class="bg-[#d8d9d8]"><th colspan="3" class="p-0 pl-[2px] pr-[4px] font-normal"><div class="flex items-center justify-between">${label}<svg class="w-[5px] h-[7px]" viewBox="0 0 5 7" fill="none" stroke="#222"><path d="M.5 3l2-2 2 2M.5 6l2-2 2 2"/></svg></div></th></tr>`;
            }
            let cell = value;
            if (type === 'b') cell = `<button class="block w-full h-[12px] leading-[10px] border border-[#e6e7e6] border-b-[#999] border-r-[#999] bg-[#d8d9d8]" aria-labelledby="p${i}">${value}</button>`;
            if (type === 'c') cell = `<input type="checkbox" aria-labelledby="p${i}" class="block appearance-none size-[10px] border border-[#555] bg-[#fcfdfc]">`;
            return `<tr class="${type === 'd' ? 'text-[#858685]' : 'text-[#222]'}">
                <td id="p${i}" class="p-0 pl-[6px] border border-l-0 border-dashed border-[#b0b1b0] overflow-hidden">${label}</td>
                <td class="p-0 pl-[1px] border border-dashed border-[#b0b1b0]">${cell}</td>
                <td class="p-0 border border-dashed border-[#b0b1b0]">${more ? '<button class="block w-full h-[12px] border border-[#aaa] bg-[#d8d9d8]" aria-label="More"></button>' : ''}</td></tr>`;
        }).join('');

        const basic = ['#ff8080', '#ffff80', '#80ff80', '#00ff80', '#80ffff', '#0080ff', '#ff80c0', '#ff80ff',
            '#ff0000', '#ffff00', '#80ff00', '#00ff40', '#00ffff', '#0080c0', '#8080c0', '#ff00ff',
            '#804040', '#ff8040', '#00ff00', '#008080', '#004080', '#8080ff', '#800040', '#ff0080',
            '#800000', '#ff8000', '#008000', '#008040', '#0000ff', '#0000a0', '#800080', '#8000ff',
            '#400000', '#804000', '#004000', '#004040', '#000080', '#000040', '#400040', '#400080',
            '#000000', '#808000', '#808040', '#808080', '#408080', '#c0c0c0', '#400040', '#ffffff'];
        const custom = ['#000000', '#ff0000', '#ffff00', '#00ff00', '#00ffff', '#0000ff', '#ff00ff', '#ffffff',
            ...Array(8).fill('#fcfdfc')];
        const swatch = (c, on) => `<button aria-label="${c}" class="h-[12px] border border-t-[#8a8b8a] border-l-[#8a8b8a] border-b-[#f8f9f8] border-r-[#f8f9f8] ${on ? 'outline outline-black' : ''}" style="background-color:${c}"></button>`;
        document.getElementById('basic').innerHTML = basic.map(c => swatch(c)).join('');
        document.getElementById('custom').innerHTML = custom.map((c, i) => swatch(c, i === 6)).join('');
    </script>
</body>
</html>
